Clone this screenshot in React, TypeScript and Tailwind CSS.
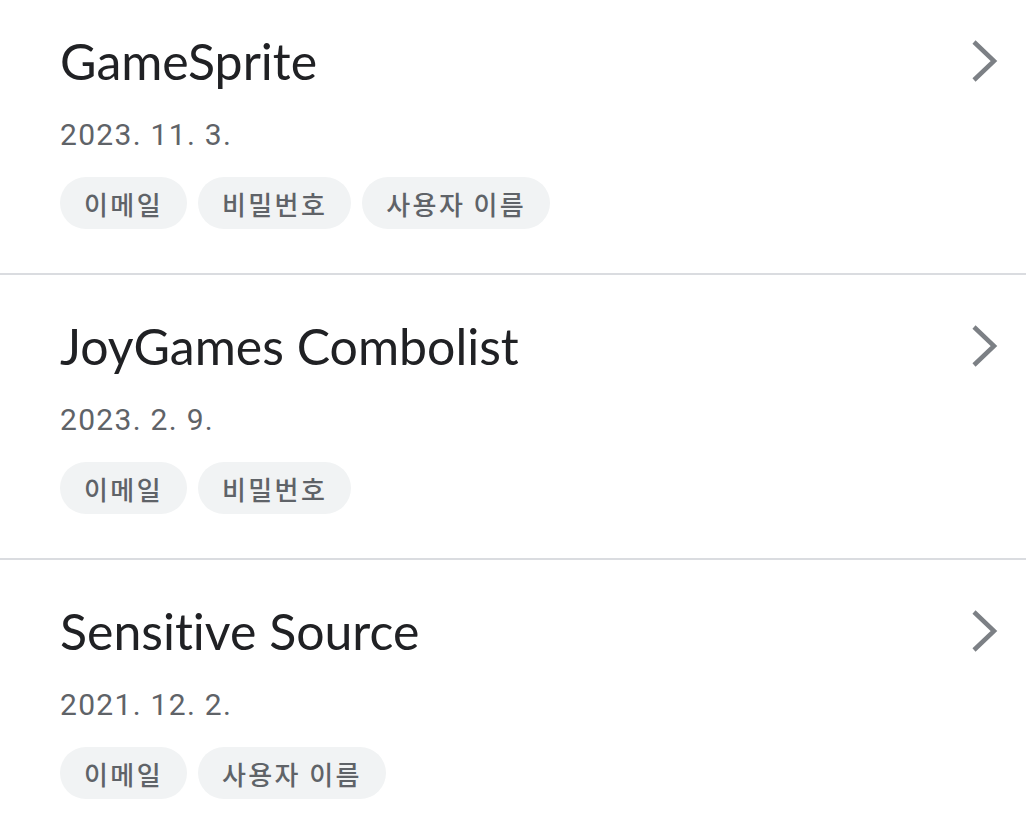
type Entry = {
  name: string;
  date: string;
  tags: string[];
};

const ENTRIES: Entry[] = [
  { name: 'GameSprite', date: '2023. 11. 3.', tags: ['이메일', '비밀번호', '사용자 이름'] },
  { name: 'JoyGames Combolist', date: '2023. 2. 9.', tags: ['이메일', '비밀번호'] },
  { name: 'Sensitive Source', date: '2021. 12. 2.', tags: ['이메일', '사용자 이름'] },
];

function Chevron() {
  return (
    <svg width="32" height="48" viewBox="0 0 32 48" className="mt-[6px] shrink-0 text-[#7c8085]">
      <polyline points="6,5 26,24 6,43" fill="none" stroke="currentColor" strokeWidth="4.5" strokeLinecap="butt" strokeLinejoin="miter" />
    </svg>
  );
}

function Row({ entry, first }: { entry: Entry; first: boolean }) {
  return (
    <div
      className={`flex items-start justify-between pl-[60px] pr-[26px] ${
        first ? '-mt-[10px]' : 'border-t-2 border-[#dadce0]'
      } pt-[41px] pb-[44px]`}
    >
      <div className="flex flex-col">
        <div className="text-[50px] leading-[60px] text-[#202124] [font-family:Lato,sans-serif] [font-variant-ligatures:none]">
          {entry.name}
        </div>
        <div className="mt-[24px] text-[30px] leading-[40px] tracking-[1.3px] text-[#5f6368] [font-family:Roboto,sans-serif]">
          {entry.date}
        </div>
        <div className="mt-[22px] flex gap-[11px]">
          {entry.tags.map((t) => (
            <span
              key={t}
              className="flex h-[52px] items-center rounded-full bg-[#f1f3f4] px-6 text-[26px] font-medium tracking-[2.4px] text-[#5f6368] [font-family:'Noto_Sans_CJK_KR',sans-serif]"
            >
              {t}
            </span>
          ))}
        </div>
      </div>
      <Chevron />
    </div>
  );
}

export default function App() {
  return (
    <div className="h-[832px] w-[1026px] overflow-hidden bg-white">
      {ENTRIES.map((e, i) => (
        <Row key={e.name} entry={e} first={i === 0} />
      ))}
    </div>
  );
}
